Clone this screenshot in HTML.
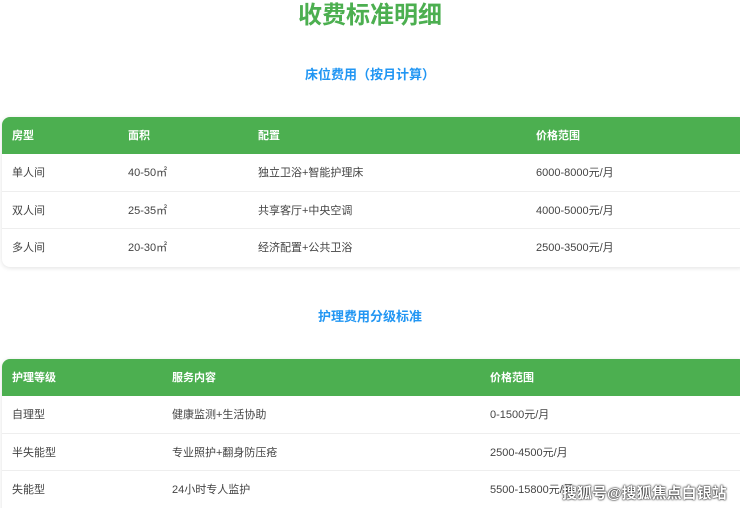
<!DOCTYPE html>
<html><head><meta charset="utf-8"><style>
*{margin:0;padding:0;box-sizing:border-box}
html,body{width:740px;height:508px;overflow:hidden}
body{background:#fff;font-family:"Liberation Sans","Noto Sans CJK SC",sans-serif;position:relative}
.t{position:absolute;left:0;width:740px;text-align:center;font-weight:bold}
.s{font-size:13px;color:#2196f3;line-height:16px}
.tb{position:absolute;left:2px;width:745px;border-radius:8px;overflow:hidden;background:#fff;box-shadow:0 1px 5px rgba(0,0,0,0.12)}
.r{position:relative;height:37.5px;border-bottom:1px solid #eee;font-size:11px;color:#444}
.r span{position:absolute;top:1px;line-height:37px}
.h{background:#4caf50;color:#fff;font-weight:bold;height:37px;border-bottom:none}
.wm{position:absolute;left:562px;top:482px;font-size:15px;color:#fff;font-weight:bold;text-shadow:0 0 2px #000,0 0 1px #000}
</style></head><body>
<div class="t" style="top:2px;font-size:24px;color:#4caf50;line-height:28px">收费标准明细</div>
<div class="t s" style="top:67px">床位费用（按月计算）</div>
<div class="tb" style="top:117px">
<div class="r h"><span style="left:10px">房型</span><span style="left:126px">面积</span><span style="left:256px">配置</span><span style="left:534px">价格范围</span></div>
<div class="r"><span style="left:10px">单人间</span><span style="left:126px">40-50㎡</span><span style="left:256px">独立卫浴+智能护理床</span><span style="left:534px">6000-8000元/月</span></div>
<div class="r"><span style="left:10px">双人间</span><span style="left:126px">25-35㎡</span><span style="left:256px">共享客厅+中央空调</span><span style="left:534px">4000-5000元/月</span></div>
<div class="r" style="border:none"><span style="left:10px">多人间</span><span style="left:126px">20-30㎡</span><span style="left:256px">经济配置+公共卫浴</span><span style="left:534px">2500-3500元/月</span></div>
</div>
<div class="t s" style="top:309px">护理费用分级标准</div>
<div class="tb" style="top:359px;height:160px">
<div class="r h"><span style="left:10px">护理等级</span><span style="left:170px">服务内容</span><span style="left:488px">价格范围</span></div>
<div class="r"><span style="left:10px">自理型</span><span style="left:170px">健康监测+生活协助</span><span style="left:488px">0-1500元/月</span></div>
<div class="r"><span style="left:10px">半失能型</span><span style="left:170px">专业照护+翻身防压疮</span><span style="left:488px">2500-4500元/月</span></div>
<div class="r" style="border:none"><span style="left:10px">失能型</span><span style="left:170px">24小时专人监护</span><span style="left:488px">5500-15800元/月</span></div>
</div>
<div class="wm">搜狐号@搜狐焦点白银站</div>
</body></html>
